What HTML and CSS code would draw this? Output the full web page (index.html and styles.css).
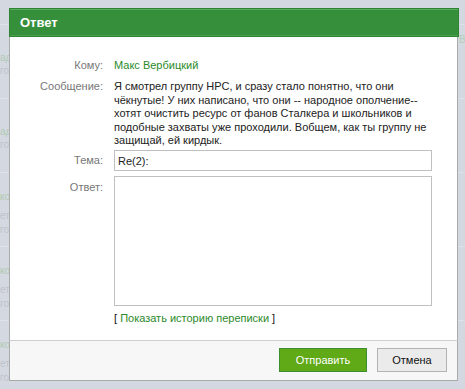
FILE: index.html
```html
<!DOCTYPE html>
<html lang="ru">
<head>
  <meta charset="UTF-8">
  <title>Ответ</title>
  <link rel="stylesheet" href="styles.css">
</head>
<body>

  <div class="page">
    <div class="row row-top"><span class="side">В</span></div>
    <div class="row row-a">
      <div class="fade green">ад</div>
      <div class="fade">го</div>
    </div>
    <div class="row row-a">
      <div class="fade green">ад</div>
      <div class="fade">го</div>
    </div>
    <div class="row row-b">
      <div class="fade green">ко</div>
      <div class="fade gap">ет</div>
      <div class="fade">го</div>
    </div>
    <div class="row row-b">
      <div class="fade green">ко</div>
      <div class="fade gap">ет</div>
      <div class="fade">го</div>
    </div>
    <div class="row row-b">
      <div class="fade green">ко</div>
      <div class="fade gap">ет</div>
      <div class="fade">го</div>
    </div>
  </div>

  <div class="dialog">
    <div class="dialog-head">Ответ</div>

    <div class="dialog-body">
      <div class="label row-to">Кому:</div>
      <div class="row-to"><a class="user" href="#">Макс Вербицкий</a></div>

      <div class="label">Сообщение:</div>
      <div class="message">Я смотрел группу НРС, и сразу стало понятно, что они чёкнутые! У них написано, что они -- народное ополчение-- хотят очистить ресурс от фанов Сталкера и школьников и подобные захваты уже проходили. Вобщем, как ты группу не защищай, ей кирдык.</div>

      <div class="label label-field">Тема:</div>
      <input class="subject" type="text" value="Re(2):">

      <div class="label label-area">Ответ:</div>
      <textarea class="answer"></textarea>

      <div></div>
      <div class="history">[ <a href="#">Показать историю переписки</a> ]</div>
    </div>

    <div class="dialog-foot">
      <button class="btn btn-send">Отправить</button>
      <button class="btn btn-cancel">Отмена</button>
    </div>
  </div>

</body>
</html>
```

FILE: styles.css
```css
* {
  box-sizing: border-box;
}

body {
  margin: 0;
  width: 465px;
  height: 389px;
  overflow: hidden;
  background-color: #d4d8e1;
  font-family: 'Liberation Sans', Arial, sans-serif;
  font-size: 11px;
  color: #222;
  position: relative;
}

/* page behind the modal */
.page {
  display: flex;
  flex-direction: column;
}

.row {
  height: 74px;
  border-bottom: 1px solid #dfe2e9;
}

.row-top {
  height: 25px;
  position: relative;
}

.side {
  position: absolute;
  left: 459px;
  top: 34px;
  color: #b4cdb7;
  font-size: 10px;
}

.row-a {
  padding-top: 26px;
}

.row-b {
  padding-top: 17px;
}

.fade {
  line-height: 13px;
  color: #bfc3cb;
  font-size: 10px;
}

.fade.green {
  color: #b0cbb3;
}

.fade.gap {
  margin-top: 6px;
  margin-bottom: 1px;
}

/* modal */
.dialog {
  position: absolute;
  left: 9px;
  top: 8px;
  width: 450px;
  height: 373px;
  display: flex;
  flex-direction: column;
}

.dialog-head {
  height: 29px;
  flex: none;
  background-color: #368f3b;
  border: 1px solid #2f8434;
  box-shadow: inset 0 1px 0 #5aab5e, inset 0 -1px 0 #4a9f4e;
  color: #fff;
  font-weight: bold;
  font-size: 13px;
  line-height: 27px;
  padding-left: 10px;
}

.dialog-body {
  flex: 1;
  background: #fff;
  border-left: 1px solid #aaa;
  border-right: 1px solid #aaa;
  margin-right: 1px;
  padding-top: 22px;
  display: grid;
  grid-template-columns: 93px 318px;
  column-gap: 11px;
  align-content: start;
  line-height: 13.4px;
}

.label {
  text-align: right;
  color: #777;
}

.row-to {
  margin-bottom: 8px;
}

.user,
.history a {
  color: #2b8a2b;
  text-decoration: none;
}

.message {
  color: #222;
}

.label-field {
  padding-top: 7px;
}

.subject {
  margin-top: 3px;
  height: 21px;
  border: 1px solid #c0c0c0;
  padding: 0 3px;
  font-family: inherit;
  font-size: 11px;
  color: #222;
  outline: none;
}

.label-area {
  padding-top: 10px;
}

.answer {
  margin-top: 5px;
  height: 130px;
  border: 1px solid #c0c0c0;
  resize: none;
  outline: none;
}

.history {
  margin-top: 6px;
  color: #111;
  font-size: 11px;
}

.dialog-foot {
  height: 41px;
  flex: none;
  background: #f7f7f7;
  border: 1px solid #aaa;
  border-top-color: #cfcfcf;
  margin-right: 1px;
  display: flex;
  justify-content: flex-end;
  align-items: flex-start;
  gap: 10px;
  padding: 7px 10px 0 0;
}

.btn {
  height: 24px;
  font-family: inherit;
  font-size: 11px;
  padding: 0;
  cursor: pointer;
}

.btn-send {
  width: 88px;
  background: #60a917;
  border: 1px solid #3d8e2c;
  color: #fff;
}

.btn-cancel {
  width: 70px;
  background: #ebebeb;
  border: 1px solid #b3b3b3;
  color: #111;
}
```
